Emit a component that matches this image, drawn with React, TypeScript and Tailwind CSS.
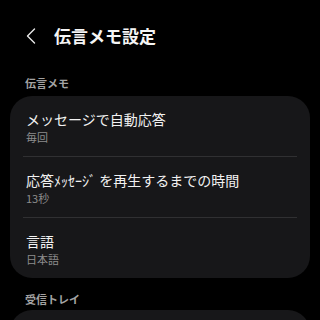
import React from "react";

const font = { fontFamily: '"Noto Sans CJK JP", "Noto Sans", sans-serif' };

function Row({ title, sub, last }: { title: string; sub: string; last?: boolean }) {
  return (
    <div className="relative">
      <div className="px-4 pt-[14px] pb-[12px]">
        <div className="text-[14px] leading-[18px] text-[#f2f2f2]">{title}</div>
        <div className="mt-[2px] text-[11px] leading-[14px] text-[#8c8c8c]">{sub}</div>
      </div>
      {!last && <div className="mx-[13px] h-px bg-[#303032]" />}
    </div>
  );
}

export default function App() {
  return (
    <div className="w-[320px] h-[320px] overflow-hidden bg-black" style={font}>
      <div className="flex items-center h-[40px] mt-[16px] pl-[26px]">
        <svg width="10" height="16" viewBox="0 0 10 16" className="mr-[18px]">
          <path d="M8.5 1 L1.5 8 L8.5 15" fill="none" stroke="#e8e8e8" strokeWidth="1.4" strokeLinecap="round" strokeLinejoin="round" />
        </svg>
        <div className="text-[17px] font-bold leading-[22px] text-[#f5f5f5]">伝言メモ設定</div>
      </div>
      <div className="mt-[20px] pl-[25px] text-[11px] font-bold leading-[14px] text-[#a3a3a3]">伝言メモ</div>
      <div className="mx-[10px] mt-[6px] rounded-[22px] bg-[#171719]">
        <Row title="メッセージで自動応答" sub="毎回" />
        <Row title="応答ﾒｯｾｰｼﾞ を再生するまでの時間" sub="13秒" />
        <Row title="言語" sub="日本語" last />
      </div>
      <div className="mt-[14px] pl-[25px] text-[11px] font-bold leading-[14px] text-[#a3a3a3]">受信トレイ</div>
      <div className="mx-[10px] mt-[4px] h-[40px] rounded-t-[22px] bg-[#171719]" />
    </div>
  );
}
